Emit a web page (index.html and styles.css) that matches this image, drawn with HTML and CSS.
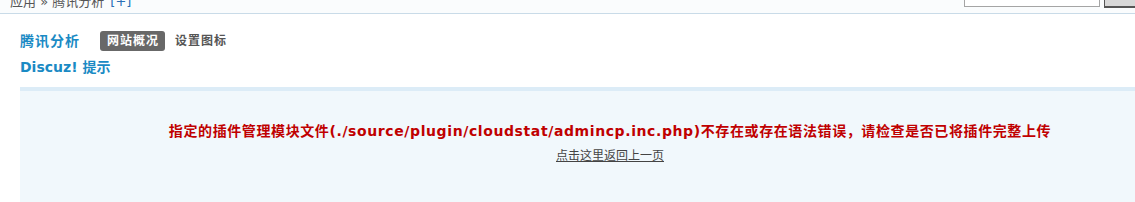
FILE: index.html
```html
<!DOCTYPE html>
<html lang="zh-CN">
<head>
<meta charset="utf-8">
<title>腾讯分析</title>
<link rel="stylesheet" href="styles.css">
</head>
<body>
<div class="topbar">
  <div class="crumb">应用 &raquo; 腾讯分析 <a class="plus" href="#">[+]</a></div>
  <div class="search">
    <span class="search-input"></span>
    <span class="search-btn">搜索</span>
  </div>
</div>
<div class="nav">
  <h2 class="nav-title">腾讯分析</h2>
  <a class="tab tab-current" href="#">网站概况</a>
  <a class="tab" href="#">设置图标</a>
</div>
<h3 class="tip-title">Discuz! 提示</h3>
<div class="msgbox">
  <p class="err">指定的插件管理模块文件(./source/plugin/cloudstat/admincp.inc.php)不存在或存在语法错误，请检查是否已将插件完整上传</p>
  <p class="back"><a href="#">点击这里返回上一页</a></p>
</div>
</body>
</html>
```

FILE: styles.css
```css
html, body {
  margin: 0;
  padding: 0;
  overflow: hidden;
  background: #fff;
}
body {
  font-family: "DejaVu Sans", "Noto Sans CJK SC", sans-serif;
  font-size: 12px;
  color: #333;
}
a { text-decoration: none; }

.topbar {
  height: 13px;
  overflow: hidden;
  border-bottom: 1px solid #c9dbe8;
  background: #fafcfd;
  display: flex;
  align-items: flex-end;
  justify-content: space-between;
}
.crumb {
  padding-left: 10px;
  font-size: 13px;
  line-height: 16px;
  margin-bottom: 3px;
  color: #555;
}
.plus { color: #2a6fb5; margin-left: 2px; }
.search {
  display: flex;
  align-items: flex-end;
  gap: 4px;
  margin-right: -10px;
}
.search-input {
  display: block;
  width: 134px;
  height: 20px;
  border: 1px solid #a5a5a5;
  background: #fff;
  margin-bottom: 6px;
}
.search-btn {
  display: block;
  width: 38px;
  height: 20px;
  border: 1px solid #555;
  border-width: 1px 2px 2px 1px;
  background: #d8d8d8;
  color: #222;
  font-size: 12px;
  line-height: 16px;
  text-align: center;
  margin-bottom: 5px;
}

.nav {
  display: flex;
  align-items: center;
  margin: 17px 0 0 20px;
  height: 20px;
}
.nav-title {
  margin: 0 20px 0 0;
  font-size: 14px;
  font-weight: bold;
  color: #1a8ac4;
  line-height: 20px;
  letter-spacing: 1px;
}
.tab {
  font-size: 12px;
  font-weight: bold;
  color: #555;
  line-height: 20px;
  height: 20px;
  margin-right: 10px;
  letter-spacing: 1px;
}
.tab-current {
  background: #686868;
  color: #fff;
  border-radius: 3px;
  padding: 0 6px 0 7px;
}

.tip-title {
  margin: 7px 0 0 20px;
  font-size: 14px;
  font-weight: bold;
  line-height: 18px;
  color: #1a8ac4;
}

.msgbox {
  margin: 11px 0 0 20px;
  width: 1180px;
  height: 120px;
  border-top: 4px solid #dcecf7;
  background: #f1f8fc;
  padding-top: 30px;
  text-align: center;
}
.err {
  margin: 0;
  font-size: 14px;
  font-weight: bold;
  line-height: 20px;
  color: #c00000;
  letter-spacing: 0.6px;
}
.back {
  margin: 7px 0 0;
  line-height: 16px;
  font-size: 12px;
}
.back a {
  color: #444;
  text-decoration: underline;
}
```
